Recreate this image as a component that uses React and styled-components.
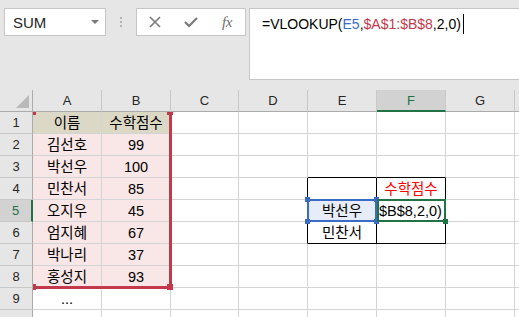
import React from "react";
import styled, { createGlobalStyle } from "styled-components";

const GlobalStyle = createGlobalStyle`
  html, body { margin: 0; padding: 0; }
  body {
    background: #e6e6e6;
    font-family: "Liberation Sans", "Noto Sans CJK KR", sans-serif;
    overflow: hidden;
  }
`;

const Page = styled.div`
  width: 519px;
  height: 317px;
  overflow: hidden;
  display: flex;
  flex-direction: column;
  background: #e6e6e6;
`;

const FormulaBar = styled.div`
  display: flex;
  align-items: flex-start;
  height: 90px;
  flex-shrink: 0;
  box-sizing: border-box;
  padding: 8px 0 0 4px;
`;

const NameBox = styled.div`
  width: 102px;
  height: 28px;
  box-sizing: border-box;
  border: 1px solid #c6c6c6;
  background: #fff;
  display: flex;
  align-items: center;
  justify-content: space-between;
  padding: 0 6px 0 8px;
  font-size: 15px;
  color: #262626;
`;

const Caret = styled.span`
  width: 0;
  height: 0;
  border-left: 4px solid transparent;
  border-right: 4px solid transparent;
  border-top: 4px solid #7a7a7a;
`;

const Grip = styled.div`
  width: 30px;
  height: 28px;
  display: flex;
  flex-direction: column;
  align-items: center;
  justify-content: center;
  gap: 2px;
`;

const GripDot = styled.span`
  width: 2px;
  height: 2px;
  background: #b3b3b3;
`;

const ButtonGroup = styled.div`
  width: 110px;
  height: 28px;
  box-sizing: border-box;
  border: 1px solid #c6c6c6;
  background: #fff;
  display: flex;
  align-items: center;
  justify-content: center;
`;

const IconSlot = styled.span`
  width: 37px;
  height: 26px;
  display: flex;
  align-items: center;
  justify-content: center;
  color: #7a7a7a;
`;

const Fx = styled.span`
  font-family: "Liberation Serif", serif;
  font-style: italic;
  font-size: 15px;
  color: #6d6d6d;
  letter-spacing: -0.5px;
`;

const FormulaInput = styled.div`
  flex: 1;
  height: 72px;
  margin-left: 3px;
  box-sizing: border-box;
  border: 1px solid #c6c6c6;
  border-right: none;
  background: #fff;
  padding: 5px 0 0 12px;
  font-size: 14px;
  line-height: 20px;
  color: #000;
  white-space: nowrap;
`;

const RefText = styled.span`
  color: ${(p) => p.$color};
`;

const TextCursor = styled.span`
  display: inline-block;
  width: 1px;
  height: 20px;
  margin-left: 2px;
  background: #000;
  vertical-align: top;
`;

const Sheet = styled.div`
  display: grid;
  grid-template-columns: 33px 69px 69px 68px 69px 69px 69px 69px 69px;
  grid-template-rows: repeat(11, 22px);
  background: #fff;
`;

const Corner = styled.div`
  grid-column: 1;
  grid-row: 1;
  z-index: 2;
  box-sizing: border-box;
  background: #e6e6e6;
  border-right: 1px solid #ababab;
  border-bottom: 1px solid #ababab;
  display: flex;
  align-items: flex-end;
  justify-content: flex-end;
  padding: 0 3px 3px 0;
`;

const CornerTriangle = styled.span`
  width: 0;
  height: 0;
  border-left: 13px solid transparent;
  border-bottom: 13px solid #b9b9b9;
`;

const ColHeader = styled.div`
  grid-column: ${(p) => p.$c};
  grid-row: 1;
  z-index: 2;
  box-sizing: border-box;
  background: ${(p) => (p.$active ? "#d2d2d2" : "#e6e6e6")};
  border-right: 1px solid #c8c8c8;
  border-bottom: ${(p) => (p.$active ? "2px solid #217346" : "1px solid #ababab")};
  display: flex;
  align-items: center;
  justify-content: center;
  font-size: 13px;
  color: ${(p) => (p.$active ? "#217346" : "#262626")};
`;

const RowHeader = styled.div`
  grid-column: 1;
  grid-row: ${(p) => p.$r};
  z-index: 2;
  box-sizing: border-box;
  background: ${(p) => (p.$active ? "#d2d2d2" : "#e6e6e6")};
  border-right: ${(p) => (p.$active ? "2px solid #217346" : "1px solid #ababab")};
  border-bottom: 1px solid #c8c8c8;
  display: flex;
  align-items: center;
  justify-content: center;
  font-size: 13px;
  color: ${(p) => (p.$active ? "#217346" : "#262626")};
`;

const Cell = styled.div`
  grid-column: ${(p) => p.$c};
  grid-row: ${(p) => p.$r};
  box-sizing: border-box;
  min-width: 0;
  background: ${(p) => p.$fill || "#fff"};
  border-right: 1px solid ${(p) => p.$br || "#d4d4d4"};
  border-bottom: 1px solid ${(p) => p.$bb || "#d4d4d4"};
  display: flex;
  align-items: ${(p) => (p.$valign === "bottom" ? "flex-end" : "center")};
  justify-content: ${(p) => (p.$align === "left" ? "flex-start" : "center")};
  padding: 0 2px;
  font-size: 14.5px;
  line-height: 20px;
  color: ${(p) => p.$color || "#000"};
  white-space: nowrap;
  overflow: hidden;
`;

const RangeFrame = styled.div`
  grid-column: ${(p) => p.$cols};
  grid-row: ${(p) => p.$rows};
  z-index: 1;
  position: relative;
  pointer-events: none;
  margin: 0 -1px -1px 0;
  border-right: 3px solid #c3394c;
  border-bottom: 3px solid #c3394c;
`;

const SelectFrame = styled.div`
  grid-column: ${(p) => p.$cols};
  grid-row: ${(p) => p.$rows};
  z-index: 1;
  position: relative;
  pointer-events: none;
  margin: -1px 0 0 ${(p) => (p.$shiftLeft ? "-1px" : "0")};
  border: 2px solid ${(p) => p.$color};
`;

const Handle = styled.span`
  position: absolute;
  width: ${(p) => p.$size}px;
  height: ${(p) => p.$size}px;
  background: ${(p) => p.$color};
  ${(p) => (p.$top !== undefined ? `top: ${p.$top}px;` : "")}
  ${(p) => (p.$bottom !== undefined ? `bottom: ${p.$bottom}px;` : "")}
  ${(p) => (p.$left !== undefined ? `left: ${p.$left}px;` : "")}
  ${(p) => (p.$right !== undefined ? `right: ${p.$right}px;` : "")}
`;

/* H column and row 10 are only partly in view, so their labels fall outside the picture */
const COLS = ["A", "B", "C", "D", "E", "F", "G", "H"];
const VISIBLE_COL_LABELS = 7;
const ROWS = [1, 2, 3, 4, 5, 6, 7, 8, 9, 10];
const VISIBLE_ROW_LABELS = 9;

const RED = "#c3394c";
const BLUE = "#3a6cc5";
const GREEN = "#217346";

const DATA = {
  A1: "이름",
  B1: "수학점수",
  A2: "김선호",
  B2: "99",
  A3: "박선우",
  B3: "100",
  A4: "민찬서",
  B4: "85",
  A5: "오지우",
  B5: "45",
  A6: "엄지혜",
  B6: "67",
  A7: "박나리",
  B7: "37",
  A8: "홍성지",
  B8: "93",
  A9: "...",
  E5: "박선우",
  E6: "민찬서",
  F4: "수학점수",
  F5: "$B$8,2,0)",
};

function cellProps(ci, r) {
  const key = COLS[ci] + r;
  const p = {};
  if (ci <= 1 && r === 1) p.$fill = "#dcd8c6";
  else if (ci <= 1 && r >= 2 && r <= 8) p.$fill = "#f9e6e6";
  if (key === "E5") p.$fill = "#e6edf8";
  if (ci >= 3 && ci <= 5 && r >= 4 && r <= 6) p.$br = "#000";
  if (ci >= 4 && ci <= 5 && r >= 3 && r <= 6) p.$bb = "#000";
  if (key === "F4") p.$color = "#ff0000";
  if (key === "F5") p.$align = "left";
  if (key === "A9") p.$valign = "bottom";
  return p;
}

const FormulaIcons = () => (
  <ButtonGroup>
    <IconSlot>
      <svg width="12" height="12" viewBox="0 0 12 12">
        <path d="M1 1 L11 11 M11 1 L1 11" stroke="#7a7a7a" strokeWidth="1.6" fill="none" />
      </svg>
    </IconSlot>
    <IconSlot>
      <svg width="14" height="12" viewBox="0 0 14 12">
        <path d="M1 6 L5 10 L13 2" stroke="#7a7a7a" strokeWidth="2.2" fill="none" />
      </svg>
    </IconSlot>
    <IconSlot>
      <Fx>fx</Fx>
    </IconSlot>
  </ButtonGroup>
);

export default function App() {
  return (
    <Page>
      <GlobalStyle />
      <FormulaBar>
        <NameBox>
          SUM
          <Caret />
        </NameBox>
        <Grip>
          <GripDot />
          <GripDot />
          <GripDot />
        </Grip>
        <FormulaIcons />
        <FormulaInput>
          =VLOOKUP(
          <RefText $color={BLUE}>E5</RefText>,
          <RefText $color={RED}>$A$1:$B$8</RefText>,2,0)
          <TextCursor />
        </FormulaInput>
      </FormulaBar>
      <Sheet>
        <Corner>
          <CornerTriangle />
        </Corner>
        {COLS.map((c, i) => (
          <ColHeader key={c} $c={i + 2} $active={c === "F"}>
            {i < VISIBLE_COL_LABELS ? c : ""}
          </ColHeader>
        ))}
        {ROWS.map((r) => (
          <RowHeader key={r} $r={r + 1} $active={r === 5}>
            {r <= VISIBLE_ROW_LABELS ? r : ""}
          </RowHeader>
        ))}
        {ROWS.map((r) =>
          COLS.map((c, ci) => (
            <Cell key={c + r} $c={ci + 2} $r={r + 1} {...cellProps(ci, r)}>
              {DATA[c + r] || ""}
            </Cell>
          ))
        )}
        <RangeFrame $cols="2 / 4" $rows="2 / 10">
          <Handle $size={6} $color={RED} $top={-3} $left={-3} />
          <Handle $size={6} $color={RED} $top={-3} $right={-4} />
          <Handle $size={6} $color={RED} $bottom={-4} $left={-3} />
          <Handle $size={6} $color={RED} $bottom={-4} $right={-4} />
        </RangeFrame>
        <SelectFrame $cols="6 / 7" $rows="6 / 7" $color={BLUE} $shiftLeft>
          <Handle $size={5} $color={BLUE} $top={-4} $left={-4} />
          <Handle $size={5} $color={BLUE} $top={-4} $right={-4} />
          <Handle $size={5} $color={BLUE} $bottom={-4} $left={-4} />
          <Handle $size={5} $color={BLUE} $bottom={-4} $right={-4} />
        </SelectFrame>
        <SelectFrame $cols="7 / 8" $rows="6 / 7" $color={GREEN}>
          <Handle $size={5} $color={GREEN} $bottom={-4} $right={-4} />
        </SelectFrame>
      </Sheet>
    </Page>
  );
}
